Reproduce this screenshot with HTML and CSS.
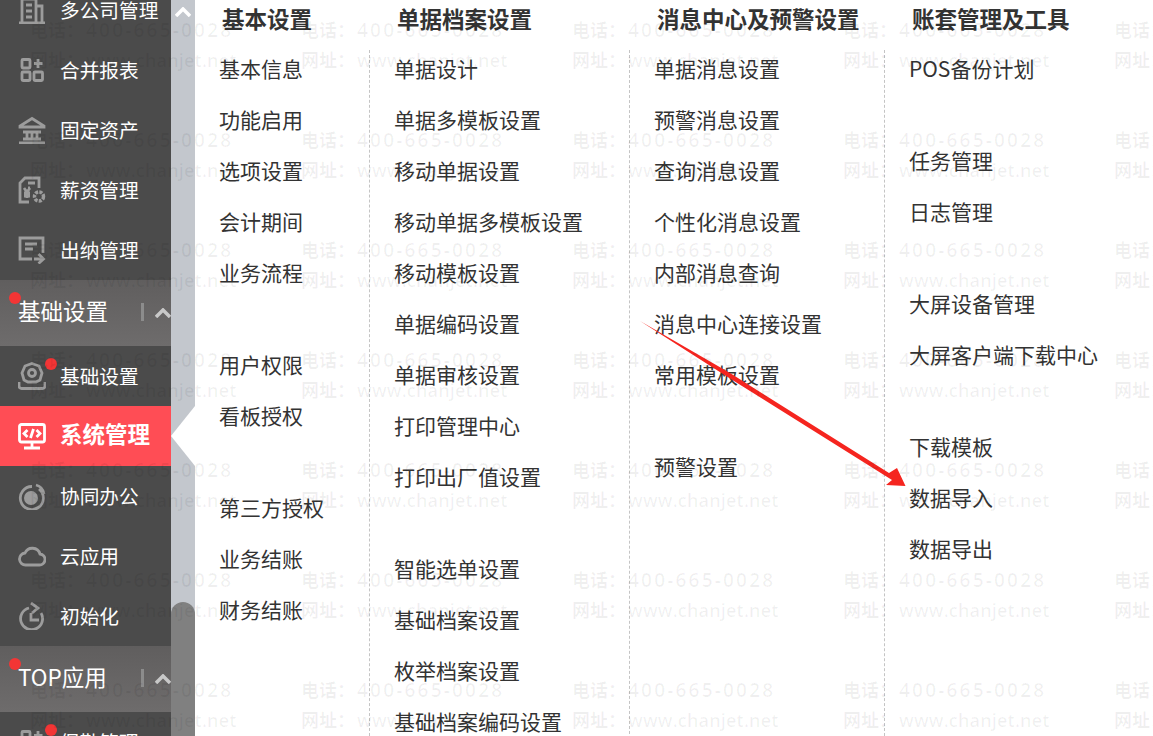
FILE: index.html
```html
<!DOCTYPE html>
<html lang="zh-CN">
<head>
<meta charset="utf-8">
<title>系统管理</title>
<link rel="stylesheet" href="styles.css">
</head>
<body>
<div class="app">
  <aside class="side">
    <nav class="nav">
      <a class="item first"><svg class="ico" viewBox="0 0 28 28"><path d="M1 27h26M4 27V3h14v24M18 10h6v17M8 9h6M8 15h6M8 21h6"/></svg><span>多公司管理</span></a>
      <a class="item"><svg class="ico" viewBox="0 0 28 28"><rect x="4" y="3.500" width="8" height="8.500" rx="1"/><rect x="4" y="16" width="8" height="8.500" rx="1"/><rect x="16" y="16" width="8.500" height="8.500" rx="1"/><path d="M20 3v9M16 7.500h8.500"/></svg><span>合并报表</span></a>
      <a class="item"><svg class="ico" viewBox="0 0 28 28"><path d="M14 2.500 2 10v1h24v-1zM5 16h18M9 16v7M14 16v7M19 16v7M5 23h18M1 27h26"/></svg><span>固定资产</span></a>
      <a class="item"><svg class="ico" viewBox="0 0 28 28"><path d="M11 26H2V7l5-5h14v10M10 7h7M10 12h2M6 12l3 4 3-4M9 16v6M6 17h6M6 20h6"/><circle cx="21" cy="20.500" r="4.500" stroke-width="3.500" stroke-dasharray="3 1.200"/></svg><span>薪资管理</span></a>
      <a class="item"><svg class="ico" viewBox="0 0 28 28"><path d="M14 23H2V2h23v15M7 8h12M7 13h8M16 23h9M20.500 18l5 5-5 4.500"/></svg><span>出纳管理</span></a>
      <div class="group"><i class="dot"></i><span>基础设置</span><b class="sep"></b><svg class="chev" viewBox="0 0 16 10"><path d="M1 9l7-7 7 7"/></svg></div>
      <a class="item"><i class="dot dot-sub"></i><svg class="ico" viewBox="0 0 28 28"><path d="M14 1.500l7 2.500 3 7-2 7-4 2h-8l-4-2-2-7 3-7z"/><circle cx="14" cy="11" r="3.500"/><path d="M1 20v4a2.500 2.500 0 0 0 2.500 2.500h21A2.500 2.500 0 0 0 27 24v-4"/></svg><span>基础设置</span></a>
      <a class="item active"><svg class="ico" viewBox="0 0 28 28"><rect x="1.500" y="2.500" width="25" height="17.500" rx="2"/><path d="M9.500 8l-3.500 3.500 3.500 3.500M18.500 8l3.500 3.500-3.500 3.500M15.500 7l-3 9M14 20v6M6 26h16"/></svg><span>系统管理</span></a>
      <a class="item"><svg class="ico" viewBox="0 0 28 28"><path d="M21 7a11.500 11.500 0 1 1-7-2.500M26 12a11 11 0 0 0-8-9"/><circle class="fill" cx="13" cy="16" r="7"/></svg><span>协同办公</span></a>
      <a class="item"><svg class="ico" viewBox="0 0 28 28"><path d="M8 23h13a5.500 5.500 0 0 0 1-11 8 8 0 0 0-15-1 6 6 0 0 0 1 12z"/></svg><span>云应用</span></a>
      <a class="item"><svg class="ico" viewBox="0 0 28 28"><path d="M11 6a11 11 0 1 0 12 5M13 1l7 5-6 5M13 11v7h8"/></svg><span>初始化</span></a>
      <div class="group"><i class="dot"></i><span>TOP应用</span><b class="sep"></b><svg class="chev" viewBox="0 0 16 10"><path d="M1 9l7-7 7 7"/></svg></div>
      <a class="item"><i class="dot dot-sub"></i><svg class="ico" viewBox="0 0 28 28"><rect x="4" y="3.500" width="8" height="8.500" rx="1"/><path d="M20 3v9M16 7.500h8.500"/></svg><span>促勤管理</span></a>
    </nav>
    <div class="track">
      <svg class="top-chev" viewBox="0 0 16 10"><path d="M1 9l7-7 7 7"/></svg>
      <i class="pointer"></i>
      <div class="thumb"></div>
    </div>
  </aside>
  <main class="menu">
    <section class="col col-1">
      <h2>基本设置</h2>
      <ul>
        <li>基本信息</li><li>功能启用</li><li>选项设置</li><li>会计期间</li><li>业务流程</li>
        <li class="gap">用户权限</li><li>看板授权</li>
        <li class="gap">第三方授权</li><li>业务结账</li><li>财务结账</li>
      </ul>
    </section>
    <section class="col col-2">
      <h2>单据档案设置</h2>
      <ul>
        <li>单据设计</li><li>单据多模板设置</li><li>移动单据设置</li><li>移动单据多模板设置</li><li>移动模板设置</li><li>单据编码设置</li><li>单据审核设置</li><li>打印管理中心</li><li>打印出厂值设置</li>
        <li class="gap">智能选单设置</li><li>基础档案设置</li><li>枚举档案设置</li><li>基础档案编码设置</li>
      </ul>
    </section>
    <section class="col col-3">
      <h2>消息中心及预警设置</h2>
      <ul>
        <li>单据消息设置</li><li>预警消息设置</li><li>查询消息设置</li><li>个性化消息设置</li><li>内部消息查询</li><li>消息中心连接设置</li><li>常用模板设置</li>
        <li class="gap">预警设置</li>
      </ul>
    </section>
    <section class="col col-4">
      <h2>账套管理及工具</h2>
      <ul>
        <li>POS备份计划</li>
        <li class="gap">任务管理</li><li>日志管理</li>
        <li class="gap">大屏设备管理</li><li>大屏客户端下载中心</li>
        <li class="gap">下载模板</li><li>数据导入</li><li>数据导出</li>
      </ul>
    </section>
  </main>
</div>
<svg class="arrow" viewBox="0 0 1153 736"><path d="M640 321 730 373 889 473 897 468 905.500 486 886 485 892 480 730 378.500z"/></svg>
<div class="marks">
  <p><b>电话：</b><span class="tel">400-665-0028</span><br><b>网址：</b><span class="url">www.chanjet.net</span></p><p><b>电话：</b><span class="tel">400-665-0028</span><br><b>网址：</b><span class="url">www.chanjet.net</span></p><p><b>电话：</b><span class="tel">400-665-0028</span><br><b>网址：</b><span class="url">www.chanjet.net</span></p><p><b>电话：</b><span class="tel">400-665-0028</span><br><b>网址：</b><span class="url">www.chanjet.net</span></p><p><b>电话：</b><span class="tel">400-665-0028</span><br><b>网址：</b><span class="url">www.chanjet.net</span></p>
  <p><b>电话：</b><span class="tel">400-665-0028</span><br><b>网址：</b><span class="url">www.chanjet.net</span></p><p><b>电话：</b><span class="tel">400-665-0028</span><br><b>网址：</b><span class="url">www.chanjet.net</span></p><p><b>电话：</b><span class="tel">400-665-0028</span><br><b>网址：</b><span class="url">www.chanjet.net</span></p><p><b>电话：</b><span class="tel">400-665-0028</span><br><b>网址：</b><span class="url">www.chanjet.net</span></p><p><b>电话：</b><span class="tel">400-665-0028</span><br><b>网址：</b><span class="url">www.chanjet.net</span></p>
  <p><b>电话：</b><span class="tel">400-665-0028</span><br><b>网址：</b><span class="url">www.chanjet.net</span></p><p><b>电话：</b><span class="tel">400-665-0028</span><br><b>网址：</b><span class="url">www.chanjet.net</span></p><p><b>电话：</b><span class="tel">400-665-0028</span><br><b>网址：</b><span class="url">www.chanjet.net</span></p><p><b>电话：</b><span class="tel">400-665-0028</span><br><b>网址：</b><span class="url">www.chanjet.net</span></p><p><b>电话：</b><span class="tel">400-665-0028</span><br><b>网址：</b><span class="url">www.chanjet.net</span></p>
  <p><b>电话：</b><span class="tel">400-665-0028</span><br><b>网址：</b><span class="url">www.chanjet.net</span></p><p><b>电话：</b><span class="tel">400-665-0028</span><br><b>网址：</b><span class="url">www.chanjet.net</span></p><p><b>电话：</b><span class="tel">400-665-0028</span><br><b>网址：</b><span class="url">www.chanjet.net</span></p><p><b>电话：</b><span class="tel">400-665-0028</span><br><b>网址：</b><span class="url">www.chanjet.net</span></p><p><b>电话：</b><span class="tel">400-665-0028</span><br><b>网址：</b><span class="url">www.chanjet.net</span></p>
  <p><b>电话：</b><span class="tel">400-665-0028</span><br><b>网址：</b><span class="url">www.chanjet.net</span></p><p><b>电话：</b><span class="tel">400-665-0028</span><br><b>网址：</b><span class="url">www.chanjet.net</span></p><p><b>电话：</b><span class="tel">400-665-0028</span><br><b>网址：</b><span class="url">www.chanjet.net</span></p><p><b>电话：</b><span class="tel">400-665-0028</span><br><b>网址：</b><span class="url">www.chanjet.net</span></p><p><b>电话：</b><span class="tel">400-665-0028</span><br><b>网址：</b><span class="url">www.chanjet.net</span></p>
  <p><b>电话：</b><span class="tel">400-665-0028</span><br><b>网址：</b><span class="url">www.chanjet.net</span></p><p><b>电话：</b><span class="tel">400-665-0028</span><br><b>网址：</b><span class="url">www.chanjet.net</span></p><p><b>电话：</b><span class="tel">400-665-0028</span><br><b>网址：</b><span class="url">www.chanjet.net</span></p><p><b>电话：</b><span class="tel">400-665-0028</span><br><b>网址：</b><span class="url">www.chanjet.net</span></p><p><b>电话：</b><span class="tel">400-665-0028</span><br><b>网址：</b><span class="url">www.chanjet.net</span></p>
  <p><b>电话：</b><span class="tel">400-665-0028</span><br><b>网址：</b><span class="url">www.chanjet.net</span></p><p><b>电话：</b><span class="tel">400-665-0028</span><br><b>网址：</b><span class="url">www.chanjet.net</span></p><p><b>电话：</b><span class="tel">400-665-0028</span><br><b>网址：</b><span class="url">www.chanjet.net</span></p><p><b>电话：</b><span class="tel">400-665-0028</span><br><b>网址：</b><span class="url">www.chanjet.net</span></p><p><b>电话：</b><span class="tel">400-665-0028</span><br><b>网址：</b><span class="url">www.chanjet.net</span></p>
</div>
</body>
</html>
```
FILE: styles.css
```css
* { box-sizing: border-box; }
html, body { margin: 0; height: 100%; overflow: hidden; background: #fff; }
body { font-family: "Noto Sans CJK SC", "Liberation Sans", sans-serif; color: #333; position: relative; }
.app { display: flex; height: 736px; overflow: hidden; }

.side { display: flex; width: 195px; flex: none; height: 736px; overflow: hidden; }
.nav { width: 171px; flex: none; background: #4b4b4b; margin-top: -20px; height: 756px; overflow: hidden; }
.item { display: flex; align-items: center; height: 60px; padding-left: 18px; gap: 14px; color: #fff; font-size: 19.700px; position: relative; white-space: nowrap; }
.item span { margin-bottom: 1px; }
.item.active { background: #ff4d55; font-weight: 700; font-size: 22.500px; }
.item.active span { margin-bottom: 6px; }
.ico { width: 28px; height: 28px; flex: none; fill: none; stroke: #9c9c9c; stroke-width: 2.800; }
.ico .fill { fill: #9c9c9c; stroke: none; }
.active .ico { stroke: #fff; }
.group { display: flex; align-items: center; height: 66px; padding-left: 18px; color: #fff; font-size: 22.500px; position: relative; background: linear-gradient(#605e5e, #6e6c6c); white-space: nowrap; }
.group span { margin-bottom: 6px; }
.dot { position: absolute; left: 9px; top: 12px; width: 12px; height: 12px; border-radius: 50%; background: #f33535; }
.dot-sub { left: 45px; top: 12px; }
.sep { position: absolute; left: 141px; top: 23px; width: 3px; height: 18px; background: #8c8c8c; }
.chev { position: absolute; left: 155px; top: 28px; width: 16px; height: 10px; fill: none; stroke: #c8c8c8; stroke-width: 3.500; }

.track { width: 24px; flex: none; background: #c3c7cd; position: relative; display: flex; flex-direction: column; justify-content: flex-end; }
.top-chev { position: absolute; left: 4px; top: 7px; width: 16px; height: 10px; fill: none; stroke: #fff; stroke-width: 3.500; }
.pointer { position: absolute; left: 0; top: 406px; width: 24px; height: 60px; background: #fff; clip-path: polygon(0 50%, 100% 0, 100% 100%); }
.thumb { height: 134px; background: #808080; border-radius: 12px 12px 0 0; }

.menu { display: flex; flex: 1; min-width: 0; height: 736px; overflow: hidden; }
.col { flex: none; display: flex; flex-direction: column; }
.col h2 { flex: none; margin: 0; height: 44px; line-height: 36px; font-size: 22.500px; font-weight: 700; padding-left: 27px; white-space: nowrap; color: #333; }
.col ul { list-style: none; margin: 6px 0 0; padding: 0 0 0 24px; flex: 1 0 auto; border-right: 1px dashed #c4c4c4; }
.col li { height: 51px; line-height: 36px; font-size: 21px; white-space: nowrap; color: #333; }
.col li.gap { margin-top: 41px; }
.col-1 { width: 175px; }
.col-2 { width: 260px; }
.col-3 { width: 255px; }
.col-4 { width: 268px; }
.col-4 ul { border-right: 0; }

.arrow { position: absolute; inset: 0; width: 1153px; height: 736px; fill: #f5251f; pointer-events: none; }
.marks { position: absolute; left: 30px; top: 15px; display: grid; grid-template-columns: repeat(5, 271px); grid-auto-rows: 110px; pointer-events: none; }
.marks p { margin: 0; font-size: 18px; line-height: 29px; color: rgba(0, 0, 0, .06); white-space: nowrap; font-family: "Open Sans", "Noto Sans CJK SC", sans-serif; font-weight: 600; }
.marks b { font-family: "Noto Sans CJK SC", sans-serif; font-weight: 700; margin-right: 2px; }
.tel { font-size: 19px; letter-spacing: 2.200px; }
.url { font-size: 18px; letter-spacing: .2px; }
```
